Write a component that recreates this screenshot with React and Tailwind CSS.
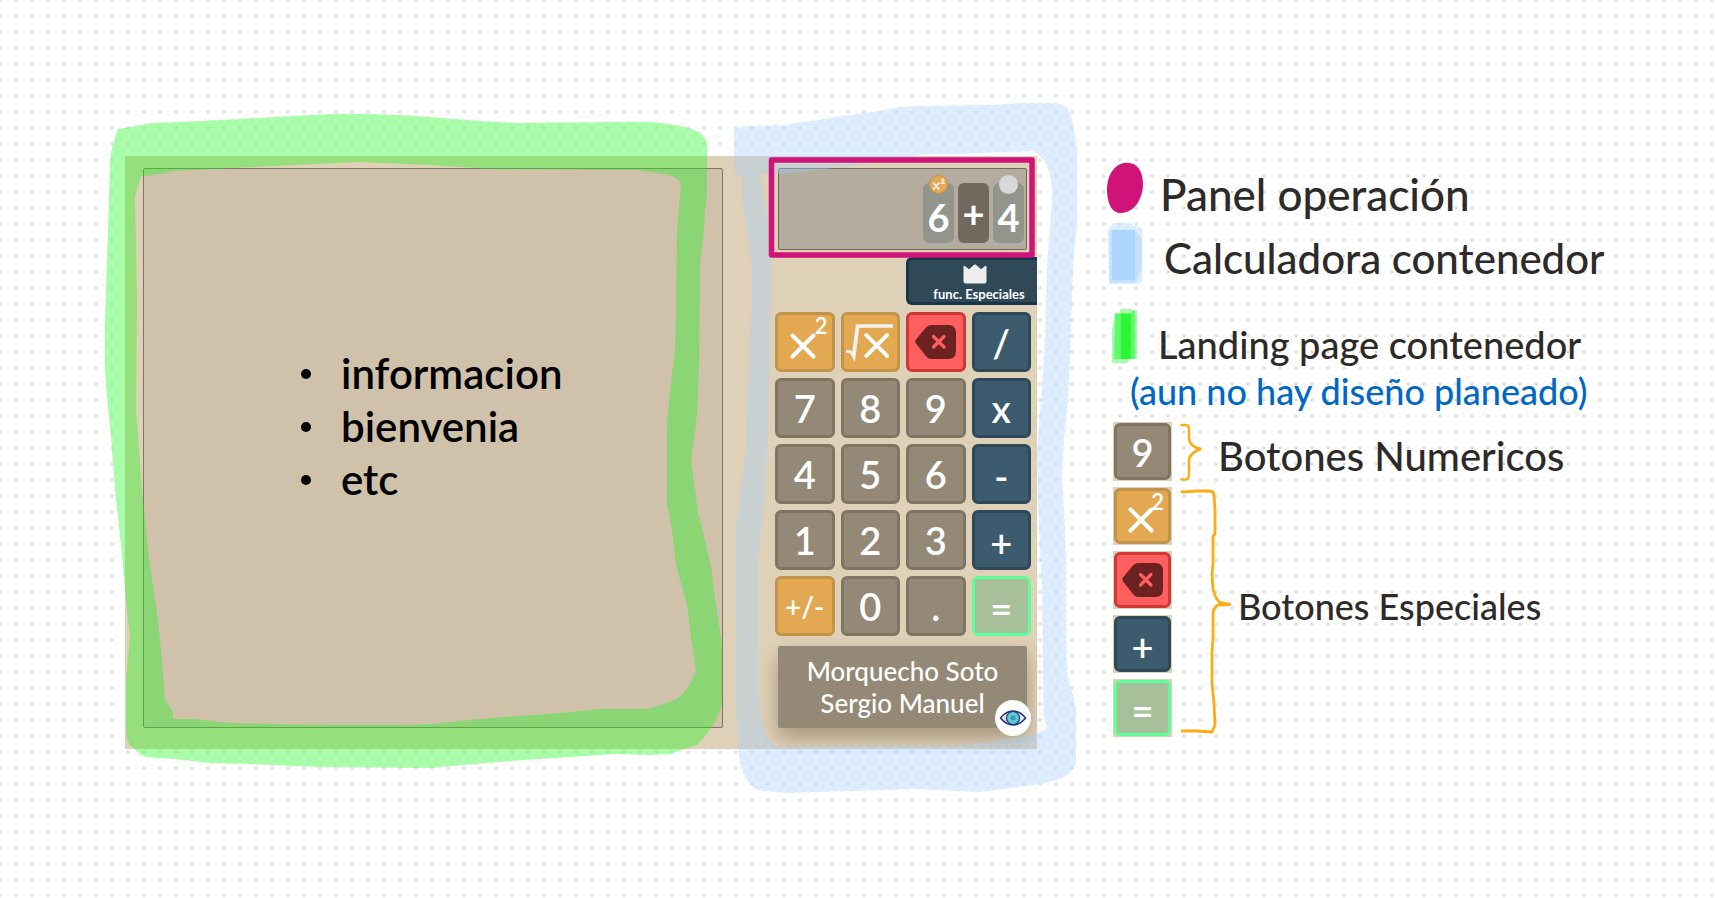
import React from "react";

const tones = {
  number: "bg-[#948877] border-[#807463] text-white",
  special: "bg-[#e2a952] border-[#c2934b] text-white",
  danger: "bg-[#ff5f5f] border-[#d03838] text-white",
  operator: "bg-[#3d5b6e] border-[#2f4958] text-white",
  equals: "bg-[#a7c09a] border-[#5cff9c] text-white",
};

function Cross({ className }) {
  return (
    <svg viewBox="0 0 26 26" className={className} fill="none" stroke="currentColor" strokeWidth="4" strokeLinecap="round" aria-hidden="true">
      <path d="M2.5 2.5 23.5 23.5M23.5 2.5 2.5 23.5" />
    </svg>
  );
}

function SquareIcon() {
  return (
    <span className="relative flex h-full w-full items-center justify-center pt-2 pr-1">
      <Cross className="h-[26px] w-[26px]" />
      <span className="absolute top-0 right-1 text-[22px] leading-[22px] font-semibold">2</span>
    </span>
  );
}

function RootIcon() {
  return (
    <svg viewBox="0 0 54 54" className="h-full w-full" fill="none" stroke="#fff" aria-hidden="true">
      <path d="M22.500 20 43.500 41M43.500 20 22.500 41" strokeWidth="4" strokeLinecap="round" />
      <path d="M2 35h4.500l1.800 1.500L12 9H49.500V12.500H15.500L11 47.500 6 38H2Z" fill="#f3f1ee" stroke="none" />
    </svg>
  );
}

function DeleteIcon() {
  return (
    <svg viewBox="0 0 42 36" className="h-9 w-[42px]" aria-hidden="true">
      <path d="M1 15.500 10.500 4Q13 1 17 1H33.500Q41 1 41 8.500V27Q41 35 33.500 35H17Q13 35 10.500 31.500L1 19.500Q-.3 17.500 1 15.500Z" fill="#6d2222" />
      <path d="M18.500 12.500 29 23M29 12.500 18.500 23" stroke="#ff5f5f" strokeWidth="3.2" strokeLinecap="round" />
    </svg>
  );
}

const faces = {
  square: { tone: "special", label: "Elevar al cuadrado", face: <SquareIcon /> },
  root: { tone: "special", label: "Raíz cuadrada", face: <RootIcon /> },
  del: { tone: "danger", label: "Borrar", face: <DeleteIcon /> },
  "/": { tone: "operator", face: "/" },
  x: { tone: "operator", face: "x" },
  "-": { tone: "operator", face: <span className="pt-1">-</span> },
  "+": { tone: "operator", face: <span className="pt-1">+</span> },
  "=": { tone: "equals", face: <span className="pt-1">=</span> },
  "+/-": { tone: "special", face: <span className="text-[28px]">+/-</span> },
};

function Key({ id }) {
  const { tone, label, face } = faces[id] ?? { tone: "number", face: id };
  return (
    <button
      type="button"
      aria-label={label}
      className={`flex h-full w-full items-center justify-center rounded-md border-3 text-[38px] leading-[38px] font-semibold ${tones[tone]}`}
    >
      {face}
    </button>
  );
}

const keypad = [
  "square", "root", "del", "/",
  "7", "8", "9", "x",
  "4", "5", "6", "-",
  "1", "2", "3", "+",
  "+/-", "0", ".", "=",
];

function Tile({ children, badge, tone }) {
  return (
    <div className={`relative flex h-[60px] w-[31px] items-center justify-center rounded-md text-[38px] leading-[38px] font-bold text-white ${tone}`}>
      {badge}
      {children}
    </div>
  );
}

function Calculator() {
  return (
    <section className="flex w-[268px] shrink-0 flex-col" aria-label="Calculadora">
      <div className="mt-3 mr-[10px] ml-[9px] flex h-[82px] items-end justify-end gap-1 rounded-xs border border-[#6f675b] bg-[#b4ad9f] px-0.5 pb-1.5">
        <Tile
          tone="bg-[#92958c] pt-2"
          badge={
            <span className="absolute -top-2 left-1.5 flex h-[19px] w-[19px] items-center justify-center rounded-full border border-[#c2934b] bg-[#e2a952]">
              <svg viewBox="0 0 16 16" className="h-4 w-4 shrink-0" fill="none" stroke="#fff" strokeWidth="1.500" strokeLinecap="round" strokeLinejoin="round" aria-hidden="true">
                <path d="M2.500 6 8 12M8 6 2.500 12" />
                <path d="M10.200 3.200Q11.500 1.500 12.800 2.500 13.600 3.800 10.200 6.300H13.500" strokeWidth="1.100" />
              </svg>
            </span>
          }
        >
          6
        </Tile>
        <Tile tone="bg-[#71695d]">+</Tile>
        <Tile tone="bg-[#92958c] pt-2" badge={<span className="absolute -top-2 left-1.5 h-[19px] w-[19px] rounded-full bg-[#d8d8d8]" />}>
          4
        </Tile>
      </div>
      <button
        type="button"
        className="mt-[7px] ml-auto flex h-12 w-[131px] flex-col items-center rounded-l-md border-3 border-r-0 border-[#16344a] bg-[#304957] pt-1 pl-1 text-[13px] leading-4 font-bold text-white"
      >
        <svg viewBox="0 0 24 20" className="h-5 w-6 shrink-0" fill="#eee" aria-hidden="true">
          <path d="M.5 2.500Q.8 1 2.200 2.200L6 5.200 10.500 1.200 12 .2 13.500 1.200 18 5.200 21.800 2.200Q23.200 1 23.500 2.500V17Q23.500 19.500 21 19.500H3Q.5 19.500 .5 17Z" />
        </svg>
        <span className="pt-0.5 pl-2">func. Especiales</span>
      </button>
      <div className="mt-[7px] mr-1.5 ml-[6px] grid auto-rows-[60px] grid-cols-4 gap-1.5">
        {keypad.map((id) => (
          <Key key={id} id={id} />
        ))}
      </div>
      <div className="relative mt-2.5 mr-[10px] mb-[21px] ml-[9px] flex h-[82px] flex-col items-center justify-center rounded-xs bg-[#948877] text-[26px] leading-8 font-medium text-white shadow-[0_10px_20px_rgba(60,40,20,0.35)]">
        <span>Morquecho Soto</span>
        <span>Sergio Manuel</span>
        <button type="button" aria-label="Ver" className="absolute -right-1 -bottom-2 flex h-9 w-9 items-center justify-center rounded-full bg-white">
          <svg viewBox="0 0 28 16" className="h-4 w-7" aria-hidden="true">
            <path d="M1.500 8Q7 1 14 1T26.500 8Q21 15 14 15T1.500 8Z" fill="#e3e6f3" stroke="#1d3277" strokeWidth="1.500" />
            <circle cx="14" cy="8" r="6.500" fill="#5fc9cf" stroke="#1d3277" strokeWidth="1.200" />
            <circle cx="14" cy="8" r="2.500" fill="#2a9dca" />
          </svg>
        </button>
      </div>
    </section>
  );
}

const greenMark =
  "M118 129Q124 128 152 123L180 122 240 119 330 114Q355 113 400 115L430 117 480 121 515 123 620 122Q655 121 675 125Q707 130 707 145L707 197 705 210 704 230 700 265 699 370 697 415 691 462 695 490 698 512 705 540 711 567 716 605 722 645 722 700Q720 722 697 745L670 754 650 755 615 754 555 758 510 761 430 768 320 767 250 764 210 763 165 758Q145 758 141 755L130 745Q126 740 126 725L126 680 130 637 125 590 121 545 115 490 111 435Q106 390 105 370L105 320 108 230 110 160Q112 145 118 129Z" +
  "M141 176Q150 176 175 171L215 169 357 162 430 165 490 169 637 170 665 174Q678 177 681 184L677 230 676 310 675 350 670 390 667 425 667 505 672 530 676 565 687 605 692 645 696 671Q688 692 675 700L648 709 600 709 550 714 490 718 430 724 405 725 330 725 230 723 195 719 173 719 173 712 165 700 162 660 158 620 148 550 142 490 138 435 136 410 137 300 135 197Z";

const blueMark =
  "M734 130Q738 126 750 126L785 125 835 117 880 111Q900 106 920 106L990 105 1020 103 1057 103Q1067 105 1070 113T1077 150L1077 225 1073 265 1070 360 1068 400 1064 440 1062 475 1065 530 1066 560 1066 625 1067 672 1076 707 1076 762Q1074 778 1040 784L980 792 915 789 850 791 785 793 758 790Q738 780 738 740L736 700 736 530 741 490 746 450 746 410 751 310 751 260 745 220 742 200 742 175 734 175Z" +
  "M760 175 767 215 771 260 770 350 768 430 765 490 758 560 758 690Q761 746 782 747L860 746 910 745 960 746 1000 740 1035 734 1047 729 1044 715 1042 600 1040 545 1038 500 1037 450 1041 400 1045 340 1047 265 1052 200Q1053 160 1033 151L960 154 925 154 905 158 850 166 800 172Z";

function Markers() {
  return (
    <svg
      viewBox="125 156 912 593"
      preserveAspectRatio="none"
      className="pointer-events-none absolute inset-0 h-full w-full overflow-visible"
      fillRule="evenodd"
      aria-hidden="true"
    >
      <path d={greenMark} fill="#1df71d" opacity="0.38" />
      <path d={blueMark} fill="#a5d0ff" opacity="0.38" />
      <path d="M771.500 160H1032V255H771.500Z" fill="none" stroke="#cf1378" strokeWidth="5.500" strokeLinejoin="round" />
    </svg>
  );
}

function Legend() {
  return (
    <aside className="flex min-w-0 flex-col pl-[70px] font-medium whitespace-nowrap text-[#2e2a29]">
      <div className="flex h-[64px] items-center gap-[17px]">
        <svg viewBox="0 0 36 52" className="h-[52px] w-9 shrink-0" aria-hidden="true">
          <path d="M19 .8C30 0 36 9 36 22 36 37 27 51 14 51 5 51 1 43 0 30-.5 14 7 1.500 19 .8Z" fill="#cf1378" />
        </svg>
        <span className="pt-3 text-[44px] leading-[48px]">Panel operación</span>
      </div>
      <div className="mt-0.5 flex h-[64px] items-center gap-[21px]">
        <svg viewBox="0 0 36 64" className="h-16 w-9 shrink-0 text-[#a5d3fc]" fill="currentColor" aria-hidden="true">
          <path d="M6 1H25V3L35 6V60H33L30 62H2L1 8Z" opacity=".4" />
          <path d="M2 8H28L35 17V48L28 61H3Z" opacity=".4" />
          <path d="M5 8H28V58H5Z" opacity=".8" />
        </svg>
        <span className="pt-2 text-[42px] leading-[48px]">Calculadora contenedor</span>
      </div>
      <div className="mt-[23px] flex h-[54px] items-center gap-5 pl-[5px]">
        <svg viewBox="0 0 26 54" className="h-[54px] w-[26px] shrink-0 text-[#1df72a]" fill="currentColor" aria-hidden="true">
          <path d="M8 0H20V1H25V50H16V54H0V20L3 5H8Z" opacity=".4" />
          <path d="M3 4H20V2H23V50H2Z" opacity=".5" />
          <path d="M9 5H19V50H9Z" opacity=".8" />
        </svg>
        <span className="pt-4 text-[38px] leading-[48px]">Landing page contenedor</span>
      </div>
      <p className="pl-[23px] text-[36px] leading-[56px] text-[#0068c4]">(aun no hay diseño planeado)</p>
      <div className="mt-[3px] flex items-center pl-[6px]">
        <div className="h-[59px] w-[59px] bg-[#dfd1b7] p-px">
          <Key id="9" />
        </div>
        <svg viewBox="0 0 22 58" className="ml-2 h-[58px] w-[22px] shrink-0" fill="none" stroke="#ffac14" strokeWidth="2.500" strokeLinecap="round" strokeLinejoin="round" aria-hidden="true">
          <path d="M1.500 2H6Q9 2 9 7V14Q9 19 12 22 15 25 20.500 26 15 28 12 31 9 34 9 38V50Q9 56.500 6 56.500H1.500" />
        </svg>
        <span className="ml-4 pt-2 text-[40px] leading-[48px]">Botones Numericos</span>
      </div>
      <div className="mt-1.5 flex items-center pl-[6px]">
        <div className="flex w-[59px] flex-col gap-1.5">
          {["square", "del", "+", "="].map((id) => (
            <div key={id} className="h-[58px] bg-[#dfd1b7] p-px">
              <Key id={id} />
            </div>
          ))}
        </div>
        <svg viewBox="0 0 52 246" className="ml-2 h-[246px] w-[52px] shrink-0" fill="none" stroke="#ffac14" strokeWidth="2.800" strokeLinecap="round" strokeLinejoin="round" aria-hidden="true">
          <path d="M2 3 17 2 29 2Q34 2 34 7L35 21V45L33 47V75L32 86 33 100Q36 113 42 114L50 115.500 38 116Q33 119 33 125V149L32 163 32 194 34 215 35 236 32 243 17 242 2 242" />
        </svg>
        <span className="ml-1.5 pb-3 text-[36px] leading-[48px]">Botones Especiales</span>
      </div>
    </aside>
  );
}

export default function App() {
  return (
    <main className="min-h-screen overflow-hidden bg-white bg-[conic-gradient(at_2px_2px,transparent_75%,#cdcdcd_0)] bg-size-[16px_16px] bg-position-[-1px_-1px] font-['Lato','Noto_Sans',sans-serif]">
      <div className="grid grid-cols-[912fr_678fr] items-start pt-[156px] pb-16 pl-[125px]">
        <div className="relative flex bg-[#dfd1b7]">
          <section className="mt-3 mr-[46px] mb-[21px] ml-[18px] flex flex-1 flex-col justify-center rounded-xs border border-[#7f7568] bg-[#d0c1ab] pb-[43px] pl-[157px]">
            <ul className="text-[42px] leading-[53px] font-semibold text-black">
              {["informacion", "bienvenia", "etc"].map((item) => (
                <li key={item} className="flex items-center gap-[30px]">
                  <span className="h-2.5 w-2.5 rounded-full bg-black" />
                  {item}
                </li>
              ))}
            </ul>
          </section>
          <Calculator />
          <Markers />
        </div>
        <Legend />
      </div>
    </main>
  );
}
